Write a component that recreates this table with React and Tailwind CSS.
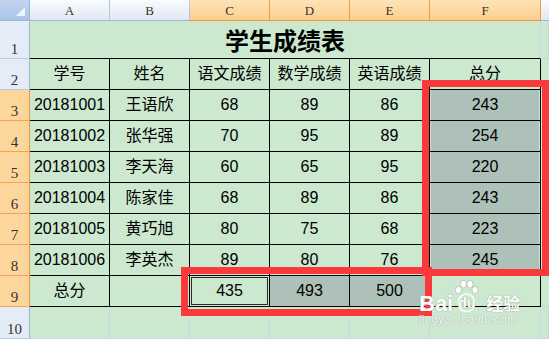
import React from "react";

const GL = "border-r border-b border-r-[#c5d7e5] border-b-[#c5d7e5]";
const TB = "border-r border-b border-r-black border-b-black";
const SHADE = "bg-[#adc1b9]";
const CELL = "flex items-center justify-center text-[16px] leading-none";

const rows = [
  ["20181001", "王语欣", "68", "89", "86", "243"],
  ["20181002", "张华强", "70", "95", "89", "254"],
  ["20181003", "李天海", "60", "65", "95", "220"],
  ["20181004", "陈家佳", "68", "89", "86", "243"],
  ["20181005", "黄巧旭", "80", "75", "68", "223"],
  ["20181006", "李英杰", "89", "80", "76", "245"],
];

const heads = ["学号", "姓名", "语文成绩", "数学成绩", "英语成绩", "总分"];

function RowHead({ n, sel }) {
  return (
    <div
      className={
        sel
          ? "flex items-end justify-center pb-[2px] bg-[#fdd69c] border-r border-b border-r-[#f29436] border-b-[#f2a55a] font-['Liberation_Serif',serif] text-[15px] leading-[14px] text-[#333]"
          : "flex items-end justify-center pb-[2px] bg-[#e4ecf7] border-r border-b border-r-[#9eb6ce] border-b-[#b8cbe0] font-['Liberation_Serif',serif] text-[15px] leading-[14px] text-[#333]"
      }
    >
      {n}
    </div>
  );
}

function ColHead({ l, sel }) {
  return (
    <div
      className={
        sel
          ? "flex items-center justify-center bg-linear-to-b from-[#fde4b8] to-[#fbcf8e] border-r border-b border-r-[#f29a3a] border-b-[#f29436] font-['Liberation_Serif',serif] text-[13px] leading-none text-[#333]"
          : "flex items-center justify-center bg-linear-to-b from-[#fafcfe] to-[#dfe8f2] border-r border-b border-r-[#b3c6da] border-b-[#9eb6ce] font-['Liberation_Serif',serif] text-[13px] leading-none text-[#333]"
      }
    >
      {l}
    </div>
  );
}

export default function App() {
  return (
    <div className="relative w-[549px] h-[339px] overflow-hidden bg-[#cce8cf] font-['Liberation_Sans','Noto_Sans_CJK_SC',sans-serif] text-black">
      <div className="grid grid-cols-[30px_80px_80px_80px_80px_80px_111px_8px] grid-rows-[21px_38px_31px_31px_31px_31px_31px_31px_31px_31px_32px]">
        {/* column header row */}
        <div className="relative border-r border-b border-r-[#9eb6ce] border-b-[#9eb6ce] bg-linear-to-b from-[#c3d5ee] to-[#a9c3e7]">
          <svg className="absolute right-[4px] bottom-[4px]" width="9" height="9" viewBox="0 0 9 9">
            <polygon points="9,0 9,9 0,9" fill="#eef4fb" />
          </svg>
        </div>
        <ColHead l="A" />
        <ColHead l="B" />
        <ColHead l="C" sel />
        <ColHead l="D" sel />
        <ColHead l="E" sel />
        <ColHead l="F" sel />
        <div className="bg-linear-to-b from-[#fafcfe] to-[#dfe8f2] border-b border-b-[#9eb6ce]" />

        {/* row 1 */}
        <RowHead n="1" />
        <div className="col-span-6 flex items-center justify-center border-r border-b border-r-[#c5d7e5] border-b-black font-['Noto_Sans_CJK_SC',sans-serif] font-bold text-[24px] leading-none">
          学生成绩表
        </div>
        <div className={GL} />

        {/* row 2 */}
        <RowHead n="2" />
        {heads.map((h) => (
          <div key={h} className={`${CELL} ${TB}`}>
            {h}
          </div>
        ))}
        <div className="border-b border-b-[#c5d7e5]" />

        {/* rows 3-8 */}
        {rows.map((r, i) => (
          <React.Fragment key={r[0]}>
            <RowHead n={String(i + 3)} sel />
            <div className={`${CELL} ${TB}`}>{r[0]}</div>
            <div className={`${CELL} ${TB}`}>{r[1]}</div>
            <div className={`${CELL} ${TB}`}>{r[2]}</div>
            <div className={`${CELL} ${TB}`}>{r[3]}</div>
            <div className={`${CELL} ${TB}`}>{r[4]}</div>
            <div className={`${CELL} ${TB} ${SHADE} shadow-[inset_1px_0_0_#d3ded9,inset_-1px_0_0_#d3ded9]`}>{r[5]}</div>
            <div className="border-b border-b-[#c5d7e5]" />
          </React.Fragment>
        ))}

        {/* row 9 */}
        <RowHead n="9" sel />
        <div className={`${CELL} ${TB}`}>总分</div>
        <div className={`${CELL} ${TB}`} />
        <div className={`${CELL} ${TB} shadow-[inset_0_0_0_1px_#cce8cf,inset_0_0_0_2px_#2a2a2a]`}>435</div>
        <div className={`${CELL} ${TB} ${SHADE}`}>493</div>
        <div className={`${CELL} ${TB} ${SHADE}`}>500</div>
        <div className={`${CELL} ${TB}`} />
        <div className="border-b border-b-[#c5d7e5]" />

        {/* row 10 */}
        <RowHead n="10" />
        <div className={GL} />
        <div className={GL} />
        <div className={GL} />
        <div className={GL} />
        <div className={GL} />
        <div className={GL} />
        <div className={GL} />
      </div>

      {/* red annotation boxes */}
      <div className="absolute left-[422px] top-[80px] w-[127px] h-[196px] border-[7px] border-[#fa3a3a]" />
      <div className="absolute left-[181px] top-[267px] w-[251px] h-[49px] border-[7px] border-[#fa3a3a]" />

      {/* watermark */}
      <div className="absolute left-[419px] top-[280px] flex flex-col items-start text-white [text-shadow:0_0_1px_rgba(80,95,88,0.75)]">
        <div className="flex items-end h-[32px]">
          <span className="font-['Liberation_Sans',sans-serif] font-bold text-[22px] leading-[17px]">Bai</span>
          <div className="relative w-[25px] h-[32px] ml-[1px]">
            <svg className="absolute left-0 top-0" width="25" height="32" viewBox="0 0 25 32">
              <g fill="white" stroke="#7d8a84" strokeOpacity="0.55" strokeWidth="0.7">
                <ellipse cx="4.5" cy="10" rx="3" ry="3.6" />
                <ellipse cx="9.5" cy="4.2" rx="3" ry="3.8" />
                <ellipse cx="16" cy="4.2" rx="3" ry="3.8" />
                <ellipse cx="21" cy="10" rx="3" ry="3.6" />
              </g>
              <path d="M4.5 23.5 C4.5 17 8.5 14 12.5 14 C16.5 14 20.5 17 20.5 23.5 C20.5 28.5 17 31.5 12.5 31.5 C8 31.5 4.5 28.5 4.5 23.5 Z" fill="none" stroke="white" strokeWidth="1.6" />
            </svg>
            <span className="absolute left-[4px] bottom-[2px] font-['Liberation_Sans',sans-serif] font-bold text-[14px] leading-[14px]">du</span>
          </div>
          <span className="ml-[7px] mb-[1px] font-['Noto_Sans_CJK_SC',sans-serif] font-bold text-[17px] leading-[17px]">经验</span>
        </div>
        <div className="mt-[1px] font-['Liberation_Sans',sans-serif] text-[11.5px] leading-[12px] tracking-[0.3px]">jingyan.baidu.com</div>
      </div>
    </div>
  );
}
